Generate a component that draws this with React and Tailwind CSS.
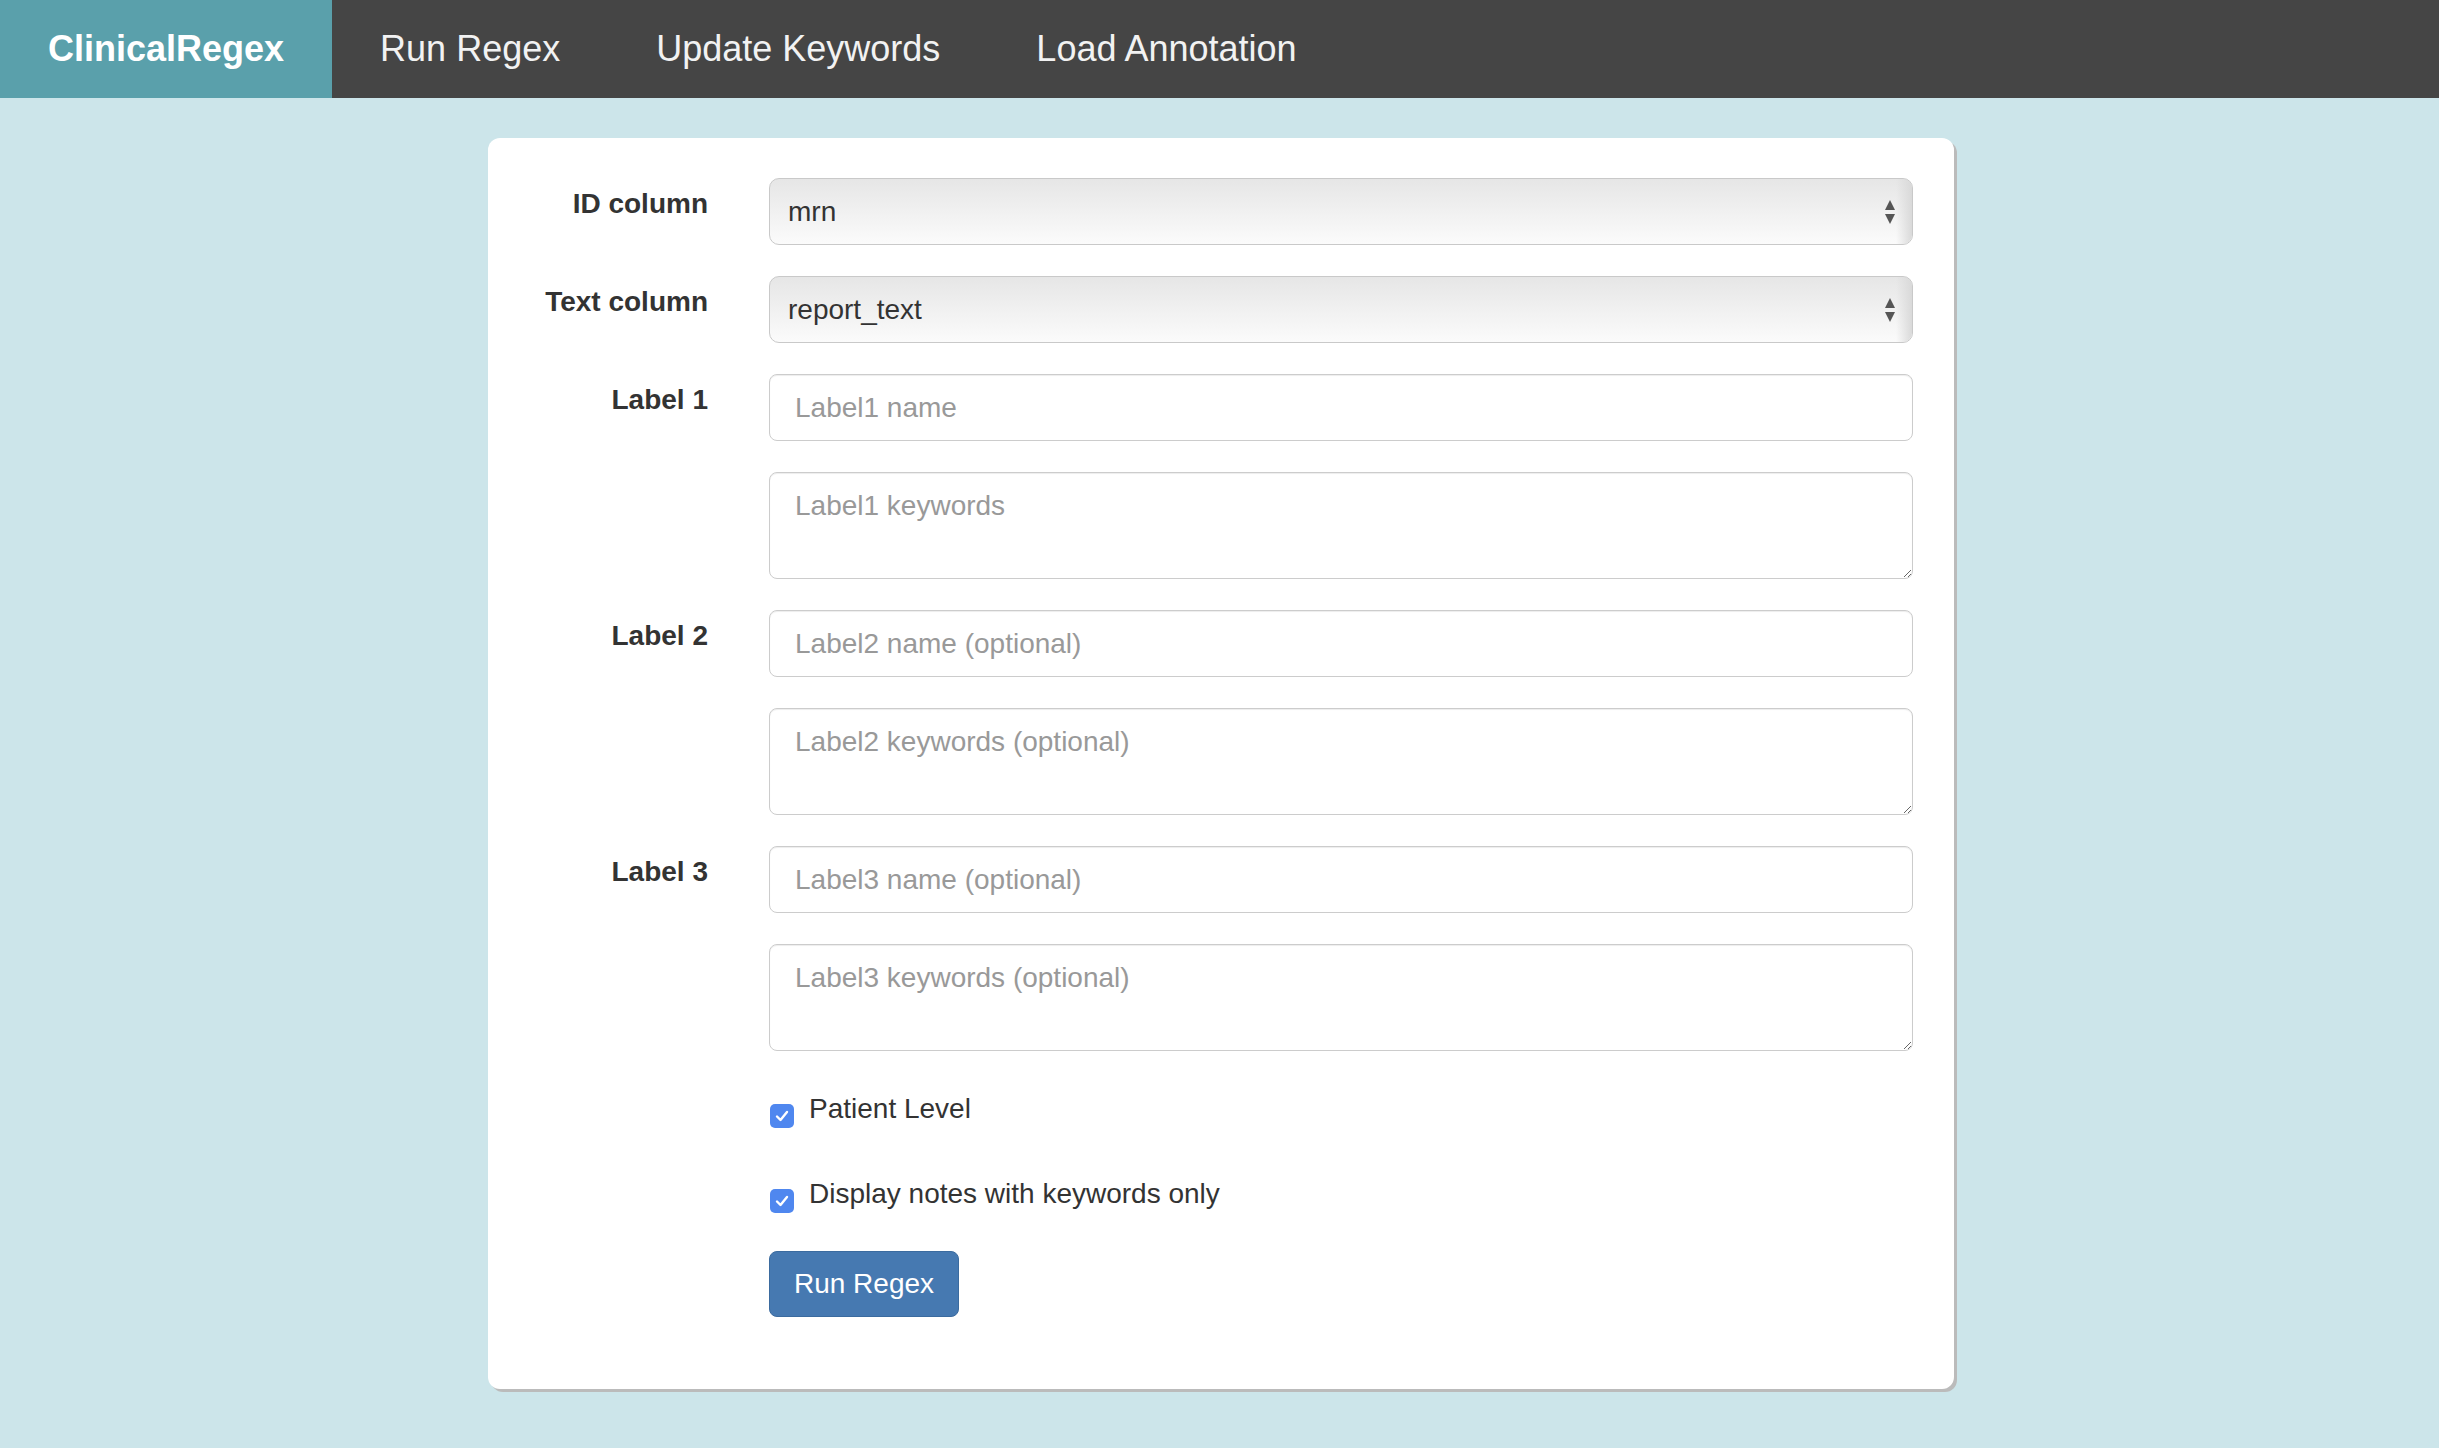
import { useState } from "react";

const navLinks = ["Run Regex", "Update Keywords", "Load Annotation"];

function FakeSelect({ value }) {
  return (
    <div className="relative h-[67px] w-full rounded-[10px] border border-[#c9c9c9] bg-gradient-to-b from-[#e6e6e6] to-[#fbfbfb] flex items-center pl-[18px] text-[28px] leading-[40px] text-[#333] overflow-hidden">
      <span>{value}</span>
      <div className="absolute right-0 top-0 h-full w-[16px] bg-gradient-to-r from-transparent to-[#d9d9d9]" />
      <svg className="absolute right-[16px] top-1/2 -translate-y-1/2" width="12" height="28" viewBox="0 0 12 28">
        <polygon points="6,2 11,12 1,12" fill="#555" />
        <polygon points="1,16 11,16 6,26" fill="#555" />
      </svg>
    </div>
  );
}

function TextInput({ placeholder }) {
  return (
    <input
      type="text"
      placeholder={placeholder}
      className="h-[67px] w-full rounded-[8px] border border-[#cccccc] bg-white pl-[25px] text-[28px] leading-[40px] text-[#555] placeholder:text-[#999] shadow-[inset_0_1px_1px_rgba(0,0,0,0.075)] outline-none"
    />
  );
}

function TextArea({ placeholder }) {
  return (
    <textarea
      placeholder={placeholder}
      className="block h-[107px] w-full rounded-[8px] border border-[#cccccc] bg-white px-[25px] pt-[13px] text-[28px] leading-[40px] text-[#555] placeholder:text-[#999] shadow-[inset_0_1px_1px_rgba(0,0,0,0.075)] outline-none"
    />
  );
}

function Row({ label, children, last }) {
  return (
    <div className={`flex ${last ? "" : "mb-[31px]"}`}>
      <div className="w-[180px] shrink-0 text-right pt-[6px] text-[28px] leading-[40px] font-bold text-[#333]">
        {label}
      </div>
      <div className="ml-[61px] flex-1">{children}</div>
    </div>
  );
}

function Check({ label, checked, onToggle }) {
  return (
    <label className="flex items-start cursor-pointer" onClick={onToggle}>
      <span className="mt-[15px] ml-[1px] flex h-[24px] w-[24px] items-center justify-center rounded-[5px] bg-[#4f87ef]">
        {checked && (
          <svg width="16" height="16" viewBox="0 0 16 16">
            <path d="M3 8.5 L6.5 12 L13 4" fill="none" stroke="white" strokeWidth="2.4" strokeLinecap="round" strokeLinejoin="round" />
          </svg>
        )}
      </span>
      <span className="ml-[15px] text-[28px] leading-[40px] text-[#333]">{label}</span>
    </label>
  );
}

export default function App() {
  const [patient, setPatient] = useState(true);
  const [notes, setNotes] = useState(true);

  return (
    <div className="min-h-[1448px] bg-[#cce5ea] font-['Liberation_Sans',Arial,sans-serif]">
      <nav className="flex h-[98px] bg-[#454545]">
        <div className="flex items-center bg-[#5aa0ab] px-[48px] text-[36px] font-bold text-white">
          ClinicalRegex
        </div>
        {navLinks.map((l) => (
          <div key={l} className="flex items-center px-[48px] text-[36px] text-[#f2f2f2]">
            {l}
          </div>
        ))}
      </nav>

      <div className="ml-[488px] mt-[40px] w-[1466px] rounded-[12px] bg-white pt-[40px] pb-[72px] pl-[40px] pr-[41px] shadow-[3px_3px_0_#bbbbbb]">
        <Row label="ID column">
          <FakeSelect value="mrn" />
        </Row>
        <Row label="Text column">
          <FakeSelect value="report_text" />
        </Row>
        <Row label="Label 1">
          <TextInput placeholder="Label1 name" />
        </Row>
        <Row label="">
          <TextArea placeholder="Label1 keywords" />
        </Row>
        <Row label="Label 2">
          <TextInput placeholder="Label2 name (optional)" />
        </Row>
        <Row label="">
          <TextArea placeholder="Label2 keywords (optional)" />
        </Row>
        <Row label="Label 3">
          <TextInput placeholder="Label3 name (optional)" />
        </Row>
        <Row label="" last>
          <TextArea placeholder="Label3 keywords (optional)" />
        </Row>

        <div className="ml-[241px]">
          <div className="mt-[38px]">
            <Check label="Patient Level" checked={patient} onToggle={() => setPatient(!patient)} />
          </div>
          <div className="mt-[45px]">
            <Check label="Display notes with keywords only" checked={notes} onToggle={() => setNotes(!notes)} />
          </div>
          <button className="mt-[37px] h-[66px] w-[190px] rounded-[8px] border border-[#3b6b9f] bg-[#4679b1] text-[28px] text-white">
            Run Regex
          </button>
        </div>
      </div>
    </div>
  );
}
